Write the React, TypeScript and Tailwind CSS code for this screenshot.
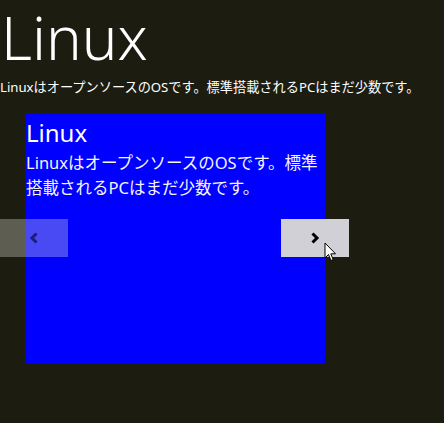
import React from "react";

const jp = { fontFamily: '"Noto Sans", "Noto Sans CJK JP", sans-serif' };

function Chevron({ dir, color }: { dir: "left" | "right"; color: string }) {
  return (
    <svg width="12" height="14" viewBox="0 0 12 14">
      {dir === "left" ? (
        <path d="M8.5 2.5 L4 7 L8.5 11.5" fill="none" stroke={color} strokeWidth="3" strokeLinejoin="miter" />
      ) : (
        <path d="M3.5 2.5 L8 7 L3.5 11.5" fill="none" stroke={color} strokeWidth="3" strokeLinejoin="miter" />
      )}
    </svg>
  );
}

export default function App() {
  return (
    <div className="relative min-h-screen w-full bg-[#1d1c11] text-white" style={jp}>
      <h1 className="pl-[1px] pt-[2px] text-[60px] leading-[70px] font-light">Linux</h1>
      <p className="mt-[7px] text-[13.2px] leading-[16px] whitespace-nowrap">
        LinuxはオープンソースのOSです。標準搭載されるPCはまだ少数です。
      </p>
      <div className="relative ml-[25px] mt-[18px] h-[250px] w-[300px] bg-[#0000ff]">
        <div className="pl-[1px] pt-[5px]">
          <div className="text-[24px] leading-[30px]">Linux</div>
          <div className="mt-[2px] text-[16.5px] leading-[25px] text-[#f4f4ff]">
            LinuxはオープンソースのOSです。標準搭載されるPCはまだ少数です。
          </div>
        </div>
        <button className="absolute left-[-25px] top-[106px] flex h-[38px] w-[68px] items-center justify-center bg-[rgba(230,230,220,0.32)]">
          <Chevron dir="left" color="#1c1c7a" />
        </button>
        <button className="absolute left-[256px] top-[106px] flex h-[38px] w-[68px] items-center justify-center bg-[#d0d0d6]">
          <Chevron dir="right" color="#000000" />
        </button>
      </div>
      <svg className="absolute left-[324px] top-[242px]" width="13" height="20" viewBox="0 0 13 20">
        <path d="M1 1 L1 16 L4.5 12.5 L7 18.5 L9.2 17.6 L6.8 11.8 L11.5 11.8 Z" fill="#ffffff" stroke="#000000" strokeWidth="1" strokeLinejoin="round" />
      </svg>
    </div>
  );
}
